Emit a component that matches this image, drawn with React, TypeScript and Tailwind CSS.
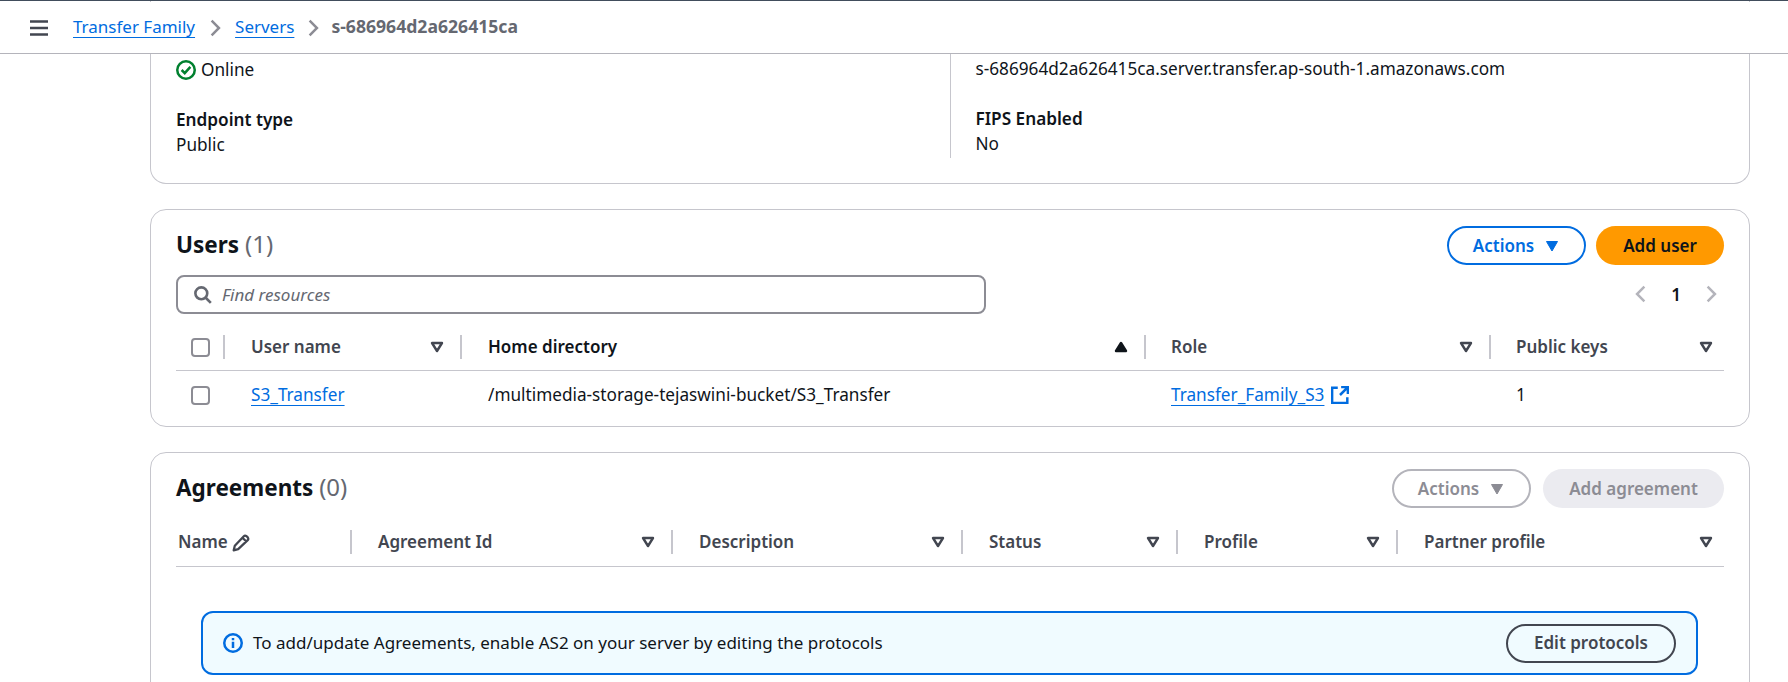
import React from "react";

const F = "font-['Noto_Sans',sans-serif]";

function Caret({ filled = false, up = false, className = "" }: { filled?: boolean; up?: boolean; className?: string }) {
  return (
    <svg viewBox="0 0 16 16" className={`w-4 h-4 ${className}`}>
      <path
        d={up ? "M8 4 L13 12 L3 12 Z" : "M3 4 L13 4 L8 12 Z"}
        fill={filled ? "currentColor" : "none"}
        stroke="currentColor"
        strokeWidth="2.4"
        strokeLinejoin="round"
      />
    </svg>
  );
}

function Chevron({ left = false, className = "" }: { left?: boolean; className?: string }) {
  return (
    <svg viewBox="0 0 16 16" className={`w-[18px] h-[18px] ${className}`}>
      <path d={left ? "M11 1.5 L4.5 8 L11 14.5" : "M5 1.5 L11.5 8 L5 14.5"} fill="none" stroke="currentColor" strokeWidth="2.2" />
    </svg>
  );
}

function Th({ label, width, caret = true, sorted = false, last = false, labelClass = "" }: { label: string; width: number; caret?: boolean; sorted?: boolean; last?: boolean; labelClass?: string }) {
  return (
    <div className={`relative flex items-center justify-between pl-[26px] h-[24px] ${last ? "pr-[10px]" : "pr-[17px]"}`} style={{ width }}>
      <span className={`text-[17px] font-semibold ${sorted ? "text-[#0f141a]" : "text-[#424650]"} ${labelClass}`}>{label}</span>
      {caret && (sorted ? <Caret filled up className="text-[#0f141a]" /> : <Caret className="text-[#424650]" />)}
      {!last && <div className="absolute right-0 top-0 h-[24px] w-[2px] bg-[#c6c6cd]" />}
    </div>
  );
}

function Checkbox() {
  return <div className="w-[19px] h-[19px] rounded-[4px] border-2 border-[#8c8c94] bg-white" />;
}

function Btn({ children, className = "" }: { children: React.ReactNode; className?: string }) {
  return <div className={`h-[39px] rounded-full flex items-center justify-center text-[17px] font-semibold ${className}`}>{children}</div>;
}

function ActionsBtn({ disabled = false }: { disabled?: boolean }) {
  return (
    <Btn className={`w-[139px] gap-[10px] border-2 ${disabled ? "border-[#b4b4bb] text-[#8c8c94]" : "border-[#006ce0] text-[#006ce0]"}`}>
      Actions
      <svg viewBox="0 0 16 16" className="w-4 h-4">
        <path d="M2.5 3.5 L13.5 3.5 L8 13 Z" fill="currentColor" stroke="currentColor" strokeWidth="1" strokeLinejoin="round" />
      </svg>
    </Btn>
  );
}

export default function App() {
  return (
    <div className={`${F} h-[682px] w-full overflow-hidden bg-white text-[17.2px] text-[#0f141a]`}>
      <div className="h-px bg-[#414d5c]" />
      <div className="h-px ml-[150px] mr-[38px] border-x border-[#c6c6cd]" />
      <header className="h-[52px] border-b border-b-[#b4b4bb] flex items-center pl-[29px]">
        <svg viewBox="0 0 20 20" className="w-5 h-5 text-[#424650]">
          <path d="M1 3.5 H19 M1 10 H19 M1 16.5 H19" stroke="currentColor" strokeWidth="2.4" />
        </svg>
        <a className="ml-[24px] -mt-[2px] text-[17px] text-[#006ce0] underline underline-offset-[4px]">Transfer Family</a>
        <Chevron className="mx-[11px] text-[#8c8c94]" />
        <a className="-mt-[2px] text-[17px] text-[#006ce0] underline underline-offset-[4px]">Servers</a>
        <Chevron className="ml-[10px] mr-[9px] text-[#8c8c94]" />
        <span className="-mt-[2px] text-[17.6px] font-bold text-[#656871]">s-686964d2a626415ca</span>
      </header>

      <main className="pl-[150px] pr-[38px] flex flex-col gap-[25px]">
        <section className="h-[130px] rounded-b-[16px] border border-t-0 border-[#c6c6cd] grid grid-cols-2 pl-[25px] pr-[26px]">
          <div className="pt-[4px]">
            <div className="flex items-center gap-[5px] h-[24px]">
              <svg viewBox="0 0 16 16" className="w-[20px] h-[20px] text-[#00802f]">
                <circle cx="8" cy="8" r="7" fill="none" stroke="currentColor" strokeWidth="2" />
                <path d="M4.5 8 L7 10.5 L11.5 5.5" fill="none" stroke="currentColor" strokeWidth="2" />
              </svg>
              <span>Online</span>
            </div>
            <div className="mt-[26px] font-semibold h-[24px] leading-[24px]">Endpoint type</div>
            <div className="h-[26px] leading-[26px]">Public</div>
          </div>
          <div className="relative pl-[26px] pt-[3px]">
            <div className="absolute left-0 top-0 h-[104px] w-px bg-[#c6c6cd]" />
            <div className="h-[24px] leading-[24px]">s-686964d2a626415ca.server.transfer.ap-south-1.amazonaws.com</div>
            <div className="mt-[26px] font-semibold h-[24px] leading-[24px]">FIPS Enabled</div>
            <div className="h-[26px] leading-[26px]">No</div>
          </div>
        </section>

        <section className="h-[218px] rounded-[16px] border border-[#c6c6cd] px-[25px] pt-[16px]">
          <div className="flex items-center justify-between h-[39px]">
            <h2 className="text-[22.5px] font-bold leading-none -mt-[2px]">
              Users <span className="font-normal text-[#656871] text-[24px]">(1)</span>
            </h2>
            <div className="flex gap-[10px]">
              <ActionsBtn />
              <Btn className="w-[128px] bg-[#ff9900] text-[#0f141a]">Add user</Btn>
            </div>
          </div>
          <div className="mt-[10px] flex items-center justify-between">
            <div className="w-[810px] h-[39px] rounded-[8px] border-2 border-[#8c8c94] flex items-center pl-[15px] gap-[10px]">
              <svg viewBox="0 0 16 16" className="w-[19px] h-[19px] text-[#656871]">
                <circle cx="7" cy="7" r="5" fill="none" stroke="currentColor" strokeWidth="2.2" />
                <path d="M10.5 10.5 L15 15" stroke="currentColor" strokeWidth="2.2" />
              </svg>
              <span className="text-[17px] italic text-[#656871]">Find resources</span>
            </div>
            <div className="flex items-center gap-[21px] pr-[4px]">
              <Chevron left className="text-[#b4b4bb]" />
              <span className="font-semibold">1</span>
              <Chevron className="text-[#b4b4bb]" />
            </div>
          </div>
          <div className="mt-[21px] flex items-start h-[36px] border-b border-[#c6c6cd]">
            <div className="relative w-[49px] h-[24px] pl-[15px] flex items-center">
              <Checkbox />
              <div className="absolute right-0 top-0 h-[24px] w-[2px] bg-[#c6c6cd]" />
            </div>
            <Th label="User name" width={237} />
            <Th label="Home directory" width={684} sorted />
            <Th label="Role" width={345} labelClass="-ml-px" />
            <Th label="Public keys" width={233} last labelClass="-ml-px" />
          </div>
          <div className="flex items-center h-[48px]">
            <div className="w-[49px] pl-[15px]">
              <Checkbox />
            </div>
            <div className="w-[237px] pl-[26px]">
              <a className="text-[#006ce0] underline underline-offset-[4px]">S3_Transfer</a>
            </div>
            <div className="w-[684px] pl-[26px]">/multimedia-storage-tejaswini-bucket/S3_Transfer</div>
            <div className="w-[345px] pl-[25px] flex items-center gap-[7px]">
              <a className="text-[#006ce0] underline underline-offset-[4px]">Transfer_Family_S3</a>
              <svg viewBox="0 0 16 16" className="w-[18px] h-[18px] text-[#006ce0]">
                <path d="M6 1.5 H1 V15 H14.5 V10 M9 1 H15 V7 M15 1 L8 8" fill="none" stroke="currentColor" strokeWidth="2.2" />
              </svg>
            </div>
            <div className="pl-[25px]">1</div>
          </div>
        </section>

        <section className="h-[300px] rounded-t-[16px] border border-[#c6c6cd] px-[25px] pt-[16px]">
          <div className="flex items-center justify-between h-[39px]">
            <h2 className="text-[22.5px] font-bold leading-none -mt-[2px]">
              Agreements <span className="font-normal text-[#656871] text-[24px]">(0)</span>
            </h2>
            <div className="flex gap-[12px]">
              <ActionsBtn disabled />
              <Btn className="w-[181px] bg-[#ebebf0] text-[#8c8c94]">Add agreement</Btn>
            </div>
          </div>
          <div className="mt-[22px] flex items-start h-[37px] border-b border-[#c6c6cd]">
            <div className="relative w-[176px] h-[25px] pl-[2px] flex items-center gap-[4px] text-[17px] text-[#424650] font-semibold">
              <span className="-mt-[2px]">Name</span>
              <svg viewBox="0 0 16 16" className="w-[18px] h-[18px]">
                <path d="M1.5 14.5 L2.5 10.5 L10.5 2 Q11.5 1 13 2 L14 3 Q15 4.5 14 5.5 L5.5 13.5 Z M9.5 3.5 L12.5 6.5" fill="none" stroke="currentColor" strokeWidth="2" strokeLinejoin="round" />
              </svg>
              <div className="absolute right-0 top-0 h-[24px] w-[2px] bg-[#c6c6cd]" />
            </div>
            <Th label="Agreement Id" width={321} />
            <Th label="Description" width={290} />
            <Th label="Status" width={215} />
            <Th label="Profile" width={220} />
            <Th label="Partner profile" width={326} last />
          </div>
          <div className="mt-[44px] ml-[25px] mr-[26px] h-[64px] rounded-[12px] border-2 border-[#006ce0] bg-[#f0fbff] flex items-center pl-[20px] pr-[20px]">
            <svg viewBox="0 0 16 16" className="w-[20px] h-[20px] text-[#006ce0]">
              <circle cx="8" cy="8" r="7" fill="none" stroke="currentColor" strokeWidth="2" />
              <path d="M8 7 V12 M8 4 V5.8" stroke="currentColor" strokeWidth="2" />
            </svg>
            <span className="ml-[10px] text-[17px] text-[#0f141a]">To add/update Agreements, enable AS2 on your server by editing the protocols</span>
            <Btn className="ml-auto w-[170px] border-2 border-[#424650] text-[#424650]">Edit protocols</Btn>
          </div>
        </section>
      </main>
    </div>
  );
}
